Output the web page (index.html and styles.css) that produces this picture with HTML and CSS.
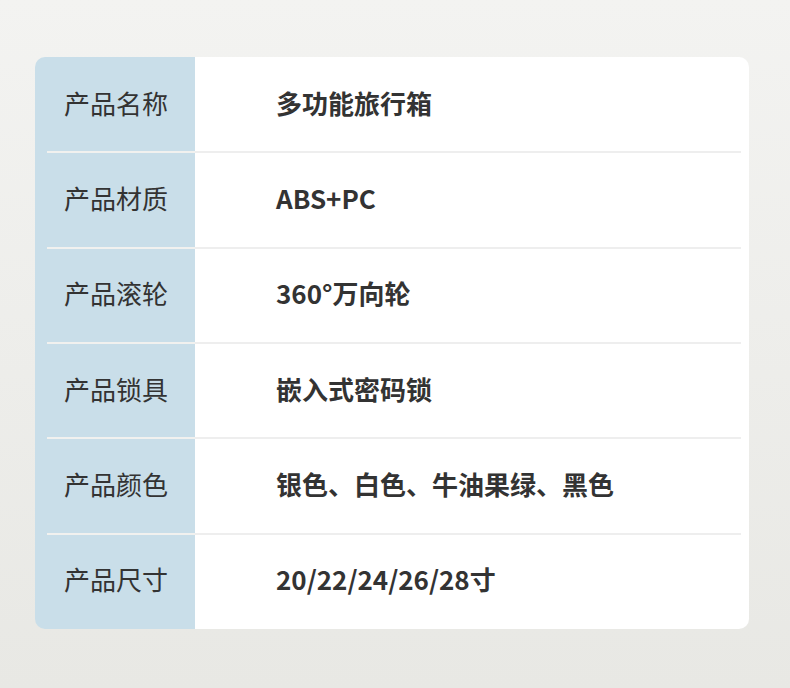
FILE: index.html
```html
<!DOCTYPE html>
<html lang="zh">
<head>
<meta charset="utf-8">
<title>产品参数</title>
<link rel="stylesheet" href="styles.css">
</head>
<body>
<div class="page">
  <div class="card">
    <div class="row"><div class="label">产品名称</div><div class="value">多功能旅行箱</div></div>
    <div class="row"><div class="label">产品材质</div><div class="value">ABS+PC</div></div>
    <div class="row"><div class="label">产品滚轮</div><div class="value">360°万向轮</div></div>
    <div class="row"><div class="label">产品锁具</div><div class="value">嵌入式密码锁</div></div>
    <div class="row"><div class="label">产品颜色</div><div class="value">银色、白色、牛油果绿、黑色</div></div>
    <div class="row"><div class="label">产品尺寸</div><div class="value">20/22/24/26/28寸</div></div>
  </div>
</div>
</body>
</html>
```
FILE: styles.css
```css
* { box-sizing: border-box; }
html, body { margin: 0; padding: 0; }
body {
  width: 790px;
  height: 688px;
  background: linear-gradient(180deg, #f3f3f1 0%, #e8e8e4 100%);
  font-family: "Noto Sans CJK SC", "Noto Sans", sans-serif;
  color: #333;
}
.page {
  padding: 57px 41px 0 35px;
}
.card {
  width: 714px;
  height: 572px;
  border-radius: 10px;
  overflow: hidden;
  display: flex;
  flex-direction: column;
  background: linear-gradient(90deg, #c9dee9 0, #c9dee9 160px, #ffffff 160px);
}
.row {
  flex: 1;
  display: flex;
  align-items: stretch;
  position: relative;
  padding-bottom: 5px;
}
.row + .row::before {
  content: "";
  position: absolute;
  top: -1px;
  left: 12px;
  width: 148px;
  height: 2px;
  background: #f1f1ef;
}
.row + .row::after {
  content: "";
  position: absolute;
  top: -1px;
  left: 160px;
  right: 8px;
  height: 2px;
  background: #eeeeee;
}
.label {
  width: 160px;
  flex: none;
  display: flex;
  align-items: center;
  padding-left: 29px;
  font-size: 26px;
  font-weight: 400;
}
.value {
  flex: 1;
  display: flex;
  align-items: center;
  padding-left: 81px;
  font-size: 26px;
  font-weight: 700;
}
```
